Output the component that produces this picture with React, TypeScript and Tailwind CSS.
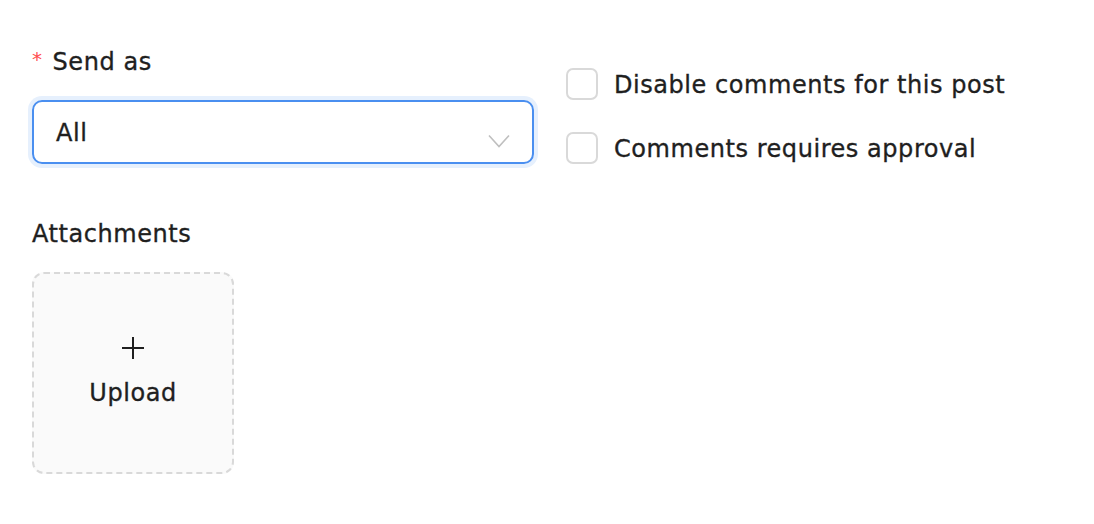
import React from 'react';

export default function App() {
  return (
    <div className="w-[1094px] h-[524px] bg-white text-[#1f1f1f] font-['DejaVu_Sans','Noto_Sans',sans-serif] text-[24px] leading-[32px] tracking-[0.55px] [-webkit-text-stroke:0.35px_#1f1f1f] pl-[32px] pt-[46px]">
      <div className="flex gap-[32px]">
        {/* Send as */}
        <div className="w-[502px]">
          <label className="flex items-center h-[32px]">
            <span className="text-[#ff4d4f] [-webkit-text-stroke:0px] text-[20px] mr-[10px] -mt-[6px]">*</span>
            Send as
          </label>
          <div className="mt-[22px] h-[64px] rounded-[10px] border-2 border-[#4a8ff0] ring-4 ring-[#e6f0fd] flex items-center justify-between pl-[22px] pr-[22px]">
            <span className="translate-y-[1px]">All</span>
            <svg width="22" height="14" viewBox="0 0 22 14" className="mt-[18px]" fill="none" stroke="#bfbfbf" strokeWidth="1.6">
              <path d="M1 1.5 L11 12.5 L21 1.5" />
            </svg>
          </div>
        </div>

        {/* Options */}
        <div className="pt-[22px] flex flex-col gap-[32px]">
          <label className="flex items-center gap-[16px] h-[32px]">
            <span className="w-[32px] h-[32px] rounded-[7px] border-2 border-[#d9d9d9] bg-white" />
            <span className="translate-y-[1px]">Disable comments for this post</span>
          </label>
          <label className="flex items-center gap-[16px] h-[32px]">
            <span className="w-[32px] h-[32px] rounded-[7px] border-2 border-[#d9d9d9] bg-white" />
            <span className="translate-y-[1px]">Comments requires approval</span>
          </label>
        </div>
      </div>

      {/* Attachments */}
      <div className="mt-[53px]">
        <div className="h-[32px] flex items-center translate-y-[1px]">Attachments</div>
        <div className="mt-[23px] w-[202px] h-[202px] rounded-[12px] border-2 border-dashed border-[#d9d9d9] bg-[#fafafa] flex flex-col items-center justify-center">
          <svg width="24" height="24" viewBox="0 0 24 24" stroke="#1f1f1f" strokeWidth="2" fill="none" className="-translate-y-[2px]">
            <path d="M12 1 V23 M1 12 H23" />
          </svg>
          <span className="mt-[15px]">Upload</span>
        </div>
      </div>
    </div>
  );
}
